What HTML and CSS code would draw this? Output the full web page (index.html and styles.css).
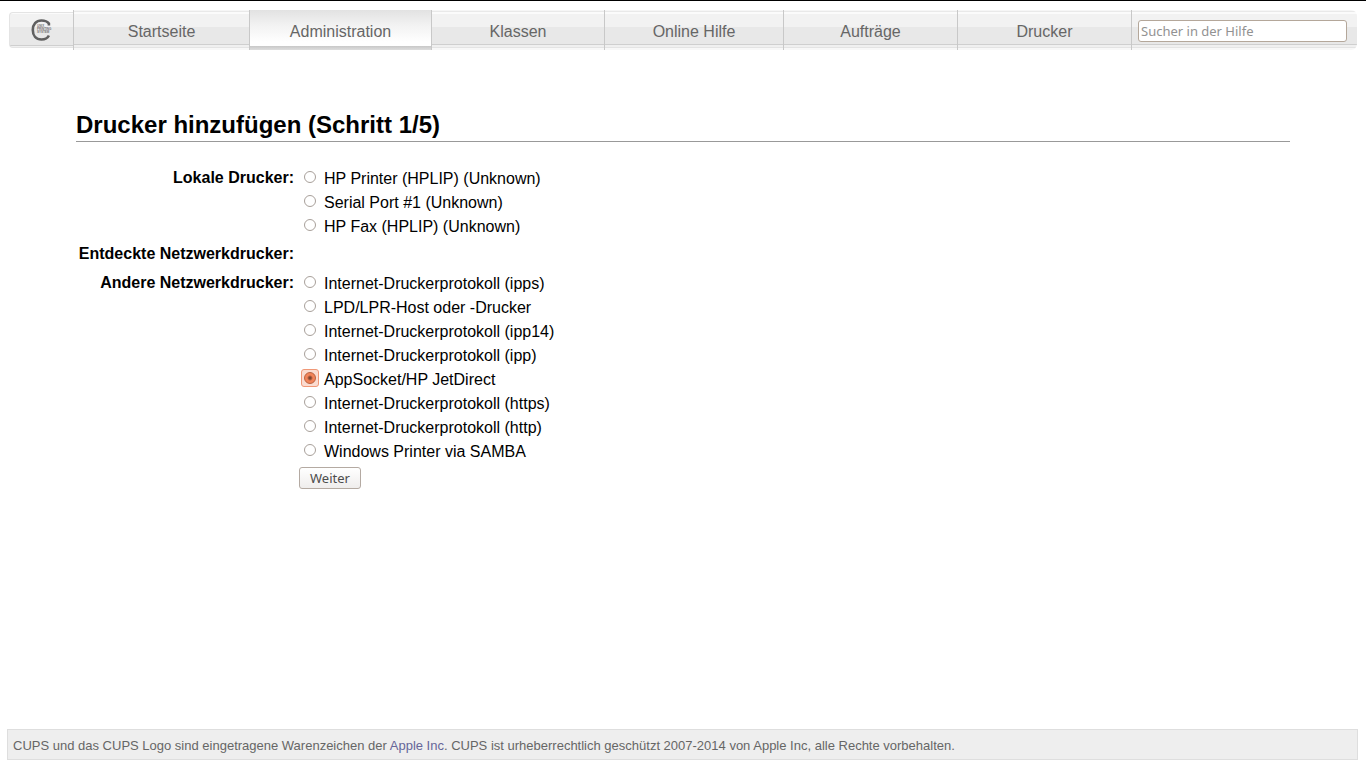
FILE: index.html
```html
<!DOCTYPE html>
<html lang="de">
<head>
<meta charset="utf-8">
<title>Drucker hinzufügen - CUPS</title>
<link rel="stylesheet" href="styles.css">
</head>
<body>
<nav class="tabs">
  <a class="logo" href="#" aria-label="CUPS">
    <svg width="22" height="24" viewBox="0 0 22 24">
      <path d="M18.900 7.500V5.500C17.500 3.600 14.800 2.500 11.500 2.500 6 2.500 2.800 6.300 2.800 12s3.200 9.500 8.700 9.500c3.500 0 6.200-1.500 7.400-4" fill="none" stroke="#606060" stroke-width="2.600"/>
      <g class="logo-text"><text x="7" y="9">UNIX</text><text x="7" y="12">PRINTING</text><text x="7" y="15">SYSTEM</text></g>
    </svg>
  </a>
  <a class="tab" href="#">Startseite</a>
  <a class="tab active" href="#" aria-current="page">Administration</a>
  <a class="tab" href="#">Klassen</a>
  <a class="tab" href="#">Online Hilfe</a>
  <a class="tab" href="#">Aufträge</a>
  <a class="tab" href="#">Drucker</a>
  <form class="search"><input type="search" aria-label="Sucher in der Hilfe" placeholder="Sucher in der Hilfe"></form>
</nav>
<main class="content">
  <h1>Drucker hinzufügen (Schritt 1/5)</h1>
  <form class="devices">
    <span class="group" id="local">Lokale Drucker:</span>
    <div class="options" role="radiogroup" aria-labelledby="local">
      <label><input type="radio" name="device">HP Printer (HPLIP) (Unknown)</label>
      <label><input type="radio" name="device">Serial Port #1 (Unknown)</label>
      <label><input type="radio" name="device">HP Fax (HPLIP) (Unknown)</label>
    </div>
    <span class="group" id="found">Entdeckte Netzwerkdrucker:</span>
    <div class="options" role="radiogroup" aria-labelledby="found"></div>
    <span class="group" id="other">Andere Netzwerkdrucker:</span>
    <div class="options" role="radiogroup" aria-labelledby="other">
      <label><input type="radio" name="device">Internet-Druckerprotokoll (ipps)</label>
      <label><input type="radio" name="device">LPD/LPR-Host oder -Drucker</label>
      <label><input type="radio" name="device">Internet-Druckerprotokoll (ipp14)</label>
      <label><input type="radio" name="device">Internet-Druckerprotokoll (ipp)</label>
      <label><input type="radio" name="device" checked>AppSocket/HP JetDirect</label>
      <label><input type="radio" name="device">Internet-Druckerprotokoll (https)</label>
      <label><input type="radio" name="device">Internet-Druckerprotokoll (http)</label>
      <label><input type="radio" name="device">Windows Printer via SAMBA</label>
    </div>
    <button class="next" type="submit">Weiter</button>
  </form>
</main>
<footer class="footer">CUPS und das CUPS Logo sind eingetragene Warenzeichen der <a href="#">Apple Inc</a>. CUPS ist urheberrechtlich geschützt 2007-2014 von Apple Inc, alle Rechte vorbehalten.</footer>
</body>
</html>
```

FILE: styles.css
```css
* { box-sizing: border-box; }

body {
  margin: 0;
  min-height: 100vh;
  display: flex;
  flex-direction: column;
  border-top: 1px solid #000;
  background: #fff;
  color: #000;
  font: 16px/24px "Liberation Sans", Arial, sans-serif;
}

.tabs {
  display: grid;
  grid-template-columns: 64px 176fr 182fr 173fr 179fr 174fr 174fr 226fr;
  align-items: center;
  margin: 9px 9px 0;
}

.tab {
  height: 40px;
  padding-top: 2px;
  border-left: 1px solid #c8c8c8;
  background: linear-gradient(#f6f6f6 0 1px, #e9e9e9 1px 2px, #fbfbfb 2px 4px, #f2f2f2 4px 17px, #e8e8e8 17px 34px, #cfcfcf 34px 35px, #f0f0f0 35px 37px, #e4e4e4 37px 38px, #f8f8f8 38px);
  color: #666;
  line-height: 40px;
  text-align: center;
  text-decoration: none;
}

.tab.active {
  background: linear-gradient(#e2e2e2, #f2f2f2 15px, #fff 32px, #fff 36px, #c8c8c8 36px, #dedede 40px);
}

.logo {
  height: 36px;
  display: flex;
  align-items: center;
  justify-content: center;
  padding-right: 2px;
  border: 1px solid #e4e4e4;
  border-right: 0;
  border-radius: 4px 0 0 4px;
  background: linear-gradient(#fbfbfb 0 1px, #f2f2f2 1px 14px, #e8e8e8 14px 32px, #cfcfcf 32px 33px, #f0f0f0 33px);
}

.logo-text {
  fill: #777;
  font-size: 3px;
  font-weight: bold;
}

.search {
  height: 40px;
  padding: 10px 10px 0 6px;
  border-left: 1px solid #c8c8c8;
  border-radius: 0 6px 6px 0;
  background: linear-gradient(#f6f6f6 0 1px, #e9e9e9 1px 2px, #fbfbfb 2px 4px, #f2f2f2 4px 17px, #e8e8e8 17px 34px, #cfcfcf 34px 35px, #f0f0f0 35px 37px, #e4e4e4 37px 38px, #f8f8f8 38px);
}

.search input {
  display: block;
  width: 100%;
  height: 22px;
  margin: 0;
  padding: 0 2px;
  border: 1px solid #b4a79a;
  border-radius: 3px;
  background: #fff;
  font: 13px "Noto Sans", sans-serif;
  appearance: none;
}

.search input::placeholder { color: #929292; }

.content {
  flex: 1;
  padding: 61px 76px 0;
}

h1 {
  margin: 0;
  padding-bottom: 2px;
  border-bottom: 1px solid #999;
  font-size: 24px;
  line-height: 28px;
}

.devices {
  display: grid;
  grid-template-columns: 218px 1fr;
  column-gap: 5px;
  row-gap: 3px;
  margin-top: 24px;
}

.group {
  min-height: 26px;
  font-weight: bold;
  text-align: right;
  line-height: 24px;
}

.options { padding: 1px 0 0 2px; }

.options label {
  display: flex;
  align-items: center;
  gap: 5px;
  line-height: 24px;
}

.options input {
  display: grid;
  place-items: center;
  width: 18px;
  height: 18px;
  margin: 0 0 4px;
  border: 1px solid transparent;
  border-radius: 3px;
  appearance: none;
}

.options input::before {
  content: "";
  box-sizing: border-box;
  width: 12px;
  height: 12px;
  border: 1px solid #a8a09a;
  border-radius: 50%;
  background: #fff;
}

.options input:checked {
  border-color: #f09877;
  background: #fbdbd0;
}

.options input:checked::before {
  border-color: #b8613f;
  background: radial-gradient(circle, #7b4430 0 1px, #f28359 3px);
}

.next {
  grid-column: 2;
  justify-self: start;
  height: 22px;
  padding: 0 10px;
  border: 1px solid #b4aaa2;
  border-radius: 3px;
  background: linear-gradient(#fff, #efedec);
  color: #4c4c4c;
  font: 13px "Noto Sans", sans-serif;
}

.footer {
  margin: 0 8px 8px 7px;
  padding: 5px 5px 3px;
  border: 1px solid #dedede;
  background: #eee;
  color: #666;
  font-size: 13px;
  line-height: 21px;
}

.footer a {
  color: #669;
  text-decoration: none;
}
```
